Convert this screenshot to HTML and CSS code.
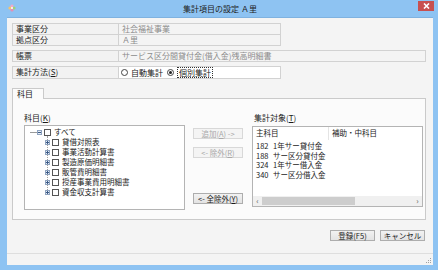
FILE: index.html
```html
<!DOCTYPE html>
<html lang="ja">
<head>
    <meta charset="UTF-8">
    <title>集計項目の設定</title>
    <link rel="stylesheet" href="styles.css">
</head>
<body>
    <div class="window">
        <div class="titlebar">
            <div class="title-left">
                <svg class="app-icon" width="8" height="8" viewBox="0 0 8 8">
                    <circle cx="4" cy="2" r="1.6" fill="#f3a6c8"/>
                    <circle cx="2" cy="4" r="1.6" fill="#f7c36b"/>
                    <circle cx="6" cy="4" r="1.6" fill="#9fd07a"/>
                    <circle cx="4" cy="6" r="1.6" fill="#e58fb5"/>
                    <circle cx="4" cy="4" r="1" fill="#fff"/>
                </svg>
            </div>
            <div class="title">集計項目の設定 Ａ里</div>
            <div class="title-right">
                <div class="close-btn">
                    <svg width="7" height="6" viewBox="0 0 7 6">
                        <path d="M1 0.5 L6 5.5 M6 0.5 L1 5.5" stroke="#fff" stroke-width="1.6"/>
                    </svg>
                </div>
            </div>
        </div>

        <div class="client">
            <div class="content">
                <div class="info-group">
                    <div class="info-row">
                        <div class="lbl">事業区分</div>
                        <div class="val">社会福祉事業</div>
                    </div>
                    <div class="info-row">
                        <div class="lbl">拠点区分</div>
                        <div class="val">Ａ里</div>
                    </div>
                </div>
                <div class="info-group">
                    <div class="info-row">
                        <div class="lbl">帳票</div>
                        <div class="val wide">サービス区分間貸付金(借入金)残高明細書</div>
                    </div>
                </div>
                <div class="info-group">
                    <div class="info-row tall">
                        <div class="lbl">集計方法(<u>S</u>)</div>
                        <div class="val radios">
                            <span class="radio"></span><span class="radio-text">自動集計</span>
                            <span class="radio checked"></span><span class="radio-text focused">個別集計</span>
                        </div>
                    </div>
                </div>

                <div class="tab-strip">
                    <div class="tab">科目</div>
                </div>
                <div class="tab-panel">
                    <div class="col-tree">
                        <div class="caption">科目(<u>K</u>)</div>
                        <div class="tree">
                            <div class="tree-vline"></div>
                            <div class="node root">
                                <span class="hline"></span><span class="expander minus"></span><span class="check"></span><span>すべて</span>
                            </div>
                            <div class="node child"><span class="expander plus"></span><span class="check"></span><span>貸借対照表</span></div>
                            <div class="node child"><span class="expander plus"></span><span class="check"></span><span>事業活動計算書</span></div>
                            <div class="node child"><span class="expander plus"></span><span class="check"></span><span>製造原価明細書</span></div>
                            <div class="node child"><span class="expander plus"></span><span class="check"></span><span>販管費明細書</span></div>
                            <div class="node child"><span class="expander plus"></span><span class="check"></span><span>授産事業費用明細書</span></div>
                            <div class="node child"><span class="expander plus"></span><span class="check"></span><span>資金収支計算書</span></div>
                        </div>
                    </div>

                    <div class="col-buttons">
                        <button class="btn disabled">追加(<u>A</u>) -&gt;</button>
                        <button class="btn disabled">&lt;- 除外(<u>R</u>)</button>
                        <button class="btn bottom">&lt;- 全除外(<u>Y</u>)</button>
                    </div>

                    <div class="col-list">
                        <div class="caption">集計対象(<u>T</u>)</div>
                        <div class="list">
                            <div class="list-head">
                                <div class="head-cell main">主科目</div>
                                <div class="head-cell">補助・中科目</div>
                            </div>
                            <div class="list-rows">
                                <div class="list-row"><span class="code">182</span>1年サー貸付金</div>
                                <div class="list-row"><span class="code">188</span>サー区分貸付金</div>
                                <div class="list-row"><span class="code">324</span>1年サー借入金</div>
                                <div class="list-row"><span class="code">340</span>サー区分借入金</div>
                            </div>
                            <div class="hscroll">
                                <span class="arrow">&lsaquo;</span>
                                <div class="track"><div class="thumb"></div></div>
                                <span class="arrow">&rsaquo;</span>
                            </div>
                        </div>
                    </div>
                </div>

                <div class="footer">
                    <button class="btn">登録(F5)</button>
                    <button class="btn">キャンセル</button>
                </div>
            </div>

            <div class="statusbar">
                <svg class="grip" width="6" height="6" viewBox="0 0 6 6">
                    <rect x="4" y="0" width="1" height="1" fill="#a0a0a0"/>
                    <rect x="2" y="2" width="1" height="1" fill="#a0a0a0"/>
                    <rect x="4" y="2" width="1" height="1" fill="#a0a0a0"/>
                    <rect x="0" y="4" width="1" height="1" fill="#a0a0a0"/>
                    <rect x="2" y="4" width="1" height="1" fill="#a0a0a0"/>
                    <rect x="4" y="4" width="1" height="1" fill="#a0a0a0"/>
                </svg>
            </div>
        </div>
    </div>
</body>
</html>
```

FILE: styles.css
```css
* {
    box-sizing: border-box;
}

body {
    margin: 0;
    font-family: "Noto Sans CJK JP", "Noto Sans", sans-serif;
    font-size: 8px;
    color: #1a1a1a;
}

u {
    text-decoration: underline;
}

.window {
    width: 438px;
    height: 270px;
    background: #8ec3f2;
    padding: 0 5px 5px 7px;
    display: flex;
    flex-direction: column;
}

/* Title bar */
.titlebar {
    height: 17px;
    display: grid;
    grid-template-columns: 1fr auto 1fr;
    align-items: start;
}

.title-left {
    padding: 4px 0 0 1px;
}

.app-icon {
    display: block;
}

.title {
    line-height: 17px;
    color: #222;
}

.title-right {
    display: flex;
    justify-content: flex-end;
}

.close-btn {
    width: 16px;
    height: 10px;
    margin: 1px -1px 0 0;
    background: #c75050;
    display: flex;
    align-items: center;
    justify-content: center;
}

.close-btn svg {
    display: block;
}

/* Client area */
.client {
    flex: 1;
    background: #f4f4f4;
    display: flex;
    flex-direction: column;
    border-top: 1px solid #7fb2e0;
}

.content {
    flex: 1;
    padding: 5px 7px 0 5px;
}

.info-group {
    margin-bottom: 4px;
}

.info-row {
    display: flex;
    height: 12px;
}

.info-row + .info-row {
    margin-top: -1px;
}

.info-row.tall {
    height: 13px;
}

.lbl {
    width: 107px;
    border: 1px solid #d2d2d2;
    background: #f2f2f2;
    padding-left: 3px;
    line-height: 10px;
    white-space: nowrap;
}

.val {
    width: 163px;
    margin-left: -1px;
    border: 1px solid #d2d2d2;
    background: #f4f4f4;
    color: #8c8c8c;
    padding-left: 3px;
    line-height: 10px;
    white-space: nowrap;
}

.val.wide {
    width: 308px;
}

.val.radios {
    background: #fff;
    color: #1a1a1a;
    display: flex;
    align-items: center;
    padding-left: 2px;
}

.radio {
    width: 7px;
    height: 7px;
    border: 1px solid #444;
    border-radius: 50%;
    background: #fff;
    margin-right: 3px;
    display: flex;
    align-items: center;
    justify-content: center;
}

.radio.checked::after {
    content: "";
    width: 3px;
    height: 3px;
    border-radius: 50%;
    background: #222;
}

.radio-text {
    margin-right: 4px;
    line-height: 9px;
}

.radio-text.focused {
    border: 1px dotted #333;
    padding: 0 1px;
}

/* Tabs */
.tab-strip {
    margin-top: 9px;
    display: flex;
}

.tab {
    width: 32px;
    height: 11px;
    border: 1px solid #cacaca;
    border-bottom: none;
    background: #fbfbfb;
    padding-left: 4px;
    line-height: 10px;
    margin-bottom: -1px;
    position: relative;
}

.tab-panel {
    height: 122px;
    width: 414px;
    border: 1px solid #cacaca;
    background: #fbfbfb;
    display: flex;
    padding: 14px 0 0 11px;
}

.caption {
    height: 10px;
    line-height: 10px;
    margin-bottom: 2px;
}

.col-tree {
    width: 161px;
}

.tree {
    height: 85px;
    border: 1px solid #b4b4b4;
    background: #fff;
    padding-top: 1px;
    font-size: 7.5px;
    position: relative;
}

.tree-vline {
    position: absolute;
    left: 22px;
    top: 10px;
    height: 56px;
    border-left: 1px dotted #a0a0a0;
}

.node {
    height: 10px;
    display: flex;
    align-items: center;
    line-height: 10px;
    white-space: nowrap;
    position: relative;
}

.node.root {
    padding-left: 5px;
}

.node.child {
    padding-left: 20px;
}

.hline {
    width: 7px;
    border-top: 1px solid #9a9a9a;
}

.expander {
    width: 5px;
    height: 5px;
    border: 1px solid #8fa3bf;
    background: #e8eef6;
    margin-right: 2px;
    position: relative;
}

.expander::before {
    content: "";
    position: absolute;
    left: 0;
    top: 1px;
    width: 3px;
    border-top: 1px solid #3b5a86;
}

.expander.plus::after {
    content: "";
    position: absolute;
    left: 1px;
    top: 0;
    height: 3px;
    border-left: 1px solid #3b5a86;
}

.check {
    width: 7px;
    height: 7px;
    border: 1px solid #555;
    background: #fff;
    margin-right: 3px;
}

.col-buttons {
    width: 50px;
    margin-left: 8px;
    padding-top: 15px;
    display: flex;
    flex-direction: column;
}

.btn {
    font-family: inherit;
    font-size: 7.5px;
    height: 11px;
    padding: 0;
    line-height: 9px;
    border: 1px solid #adadad;
    background: linear-gradient(#f2f2f2, #e3e3e3);
    color: #1a1a1a;
    white-space: nowrap;
}

.btn.disabled {
    border-color: #d8d8d8;
    background: #f4f4f4;
    color: #a8a8a8;
}

.col-buttons .btn + .btn {
    margin-top: 8px;
}

.col-buttons .btn.bottom {
    margin-top: 35px;
}

.col-list {
    width: 171px;
    margin-left: 9px;
}

.col-list .caption {
    padding-left: 2px;
    margin-bottom: 3px;
}

.list {
    height: 81px;
    border: 1px solid #b4b4b4;
    background: #fff;
    display: flex;
    flex-direction: column;
    font-size: 7.5px;
}

.list-head {
    display: flex;
    height: 13px;
    line-height: 12px;
}

.head-cell {
    padding-left: 3px;
}

.head-cell.main {
    width: 76px;
    border-right: 1px solid #e4e4e4;
}

.list-rows {
    flex: 1;
    padding: 1px 0 0 3px;
}

.list-row {
    height: 9.5px;
    line-height: 9.5px;
    white-space: nowrap;
}

.code {
    display: inline-block;
    width: 17px;
}

.hscroll {
    height: 10px;
    display: flex;
    align-items: center;
    background: #f0f0f0;
}

.arrow {
    width: 9px;
    text-align: center;
    color: #555;
    font-size: 8px;
    line-height: 10px;
}

.track {
    flex: 1;
    height: 8px;
}

.thumb {
    width: 93px;
    height: 8px;
    background: #cdcdcd;
}

/* Footer */
.footer {
    display: flex;
    justify-content: flex-end;
    gap: 5px;
    padding: 10px 2px 0 0;
    width: 415px;
}

.footer .btn {
    width: 45px;
}

.statusbar {
    height: 12px;
    border-top: 1px solid #dedede;
    display: flex;
    justify-content: flex-end;
    align-items: flex-end;
    padding: 0 1px 1px 0;
}

.grip {
    display: block;
}
```
